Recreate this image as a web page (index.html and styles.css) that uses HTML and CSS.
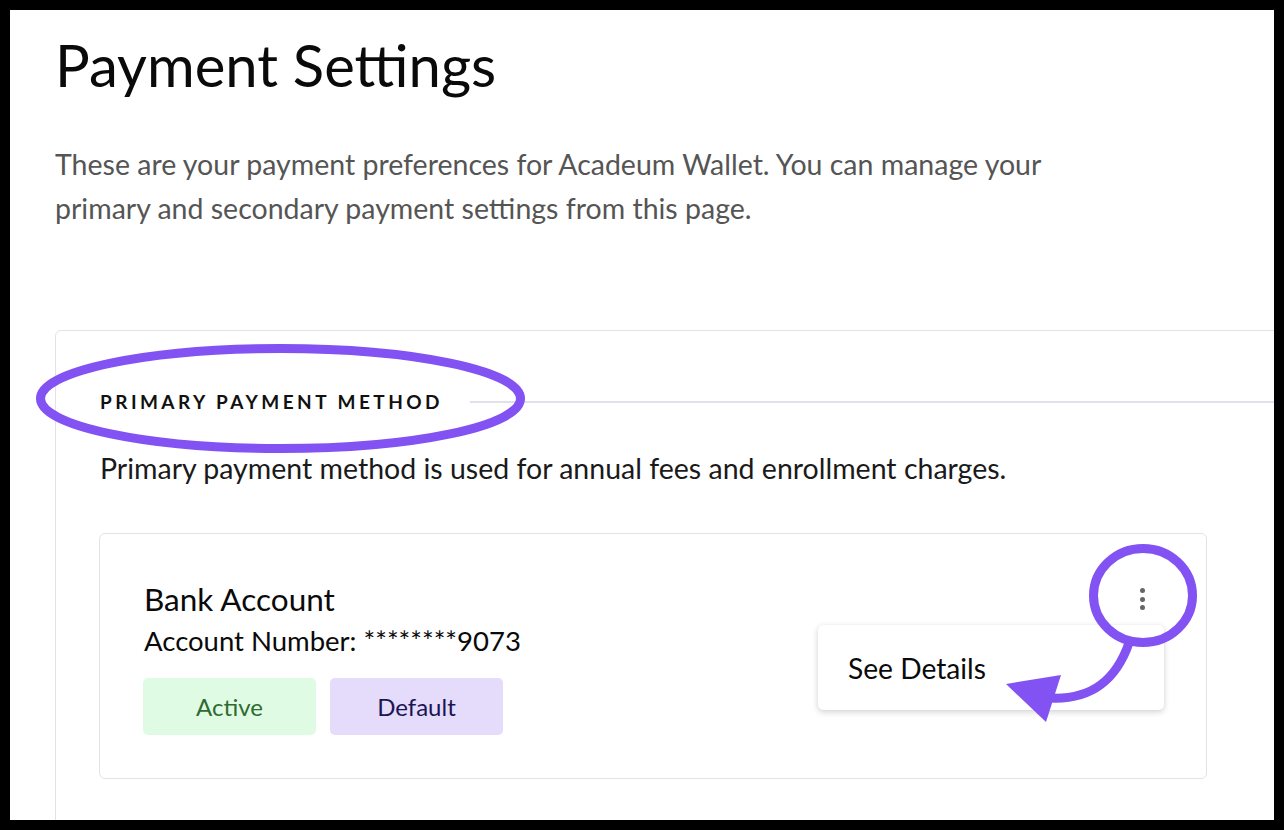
FILE: index.html
```html
<!DOCTYPE html>
<html lang="en">
<head>
<meta charset="utf-8">
<title>Payment Settings</title>
<link rel="stylesheet" href="styles.css">
</head>
<body>
<main class="page">
  <h1 class="title">Payment Settings</h1>
  <p class="intro">These are your payment preferences for Acadeum Wallet. You can manage your primary and secondary payment settings from this page.</p>

  <section class="panel">
    <div class="panel-head">
      <h2 class="panel-title">PRIMARY PAYMENT METHOD</h2>
      <div class="panel-rule"></div>
    </div>
    <p class="panel-desc">Primary payment method is used for annual fees and enrollment charges.</p>

    <div class="method">
      <div class="method-info">
        <div class="method-name">Bank Account</div>
        <div class="method-number">Account Number: ********9073</div>
        <div class="badges">
          <span class="badge badge-active">Active</span>
          <span class="badge badge-default">Default</span>
        </div>
      </div>
      <div class="method-actions">
        <button class="kebab" aria-label="More options">
          <span class="dot"></span><span class="dot"></span><span class="dot"></span>
        </button>
        <div class="menu">
          <div class="menu-item">See Details</div>
        </div>
      </div>
    </div>
  </section>

  <svg class="annotations" width="1264" height="810" viewBox="10 10 1264 810" aria-hidden="true">
    <ellipse cx="280.5" cy="398.5" rx="240" ry="50" fill="none" stroke="#8352f2" stroke-width="9"/>
    <ellipse cx="1143" cy="595.5" rx="49.5" ry="47" fill="none" stroke="#8352f2" stroke-width="9"/>
    <path d="M1129,643 C1116,680 1092,700 1050,698" fill="none" stroke="#8352f2" stroke-width="9"/>
    <polygon points="1006,684 1061,675 1046,722" fill="#8352f2"/>
  </svg>
</main>
</body>
</html>
```

FILE: styles.css
```css
* { box-sizing: border-box; }

html, body {
  margin: 0;
  padding: 0;
  background: #000;
}

body {
  font-family: Lato, "Open Sans", sans-serif;
  color: #111;
}

.page {
  position: relative;
  margin: 10px;
  width: 1264px;
  height: 810px;
  background: #fff;
  overflow: hidden;
  padding-left: 45px;
}

.title {
  margin: 20px 0 0;
  font-size: 58px;
  line-height: 70px;
  font-weight: 400;
  color: #0a0a0a;
}

.intro {
  margin: 42px 0 0;
  width: 1040px;
  font-size: 28.5px;
  line-height: 44px;
  color: #555;
}

.panel {
  margin-top: 100px;
  width: 1300px;
  height: 600px;
  border: 1px solid #e2e3ea;
  border-radius: 6px;
  padding: 0 44px 0 43px;
}

.panel-head {
  display: flex;
  align-items: center;
  margin-top: 58.5px;
  padding-left: 1px;
}

.panel-title {
  margin: 0;
  font-size: 19px;
  line-height: 24px;
  font-weight: 700;
  letter-spacing: 3.45px;
  color: #111;
}

.panel-rule {
  flex: 1;
  height: 2px;
  margin-left: 27px;
  margin-right: -44px;
  background: #dfe2ea;
}

.panel-desc {
  margin: 37.5px 0 0;
  padding-left: 1px;
  font-size: 28.5px;
  line-height: 34px;
  color: #1a1a1a;
}

.method {
  margin-top: 48px;
  width: 1108px;
  border: 1px solid #e2e3ea;
  border-radius: 6px;
  padding: 45px 0 43px 43px;
  display: flex;
  justify-content: space-between;
}

.method-name {
  font-size: 31.5px;
  line-height: 40px;
  color: #0a0a0a;
  padding-left: 1px;
}

.method-number {
  font-size: 27.5px;
  line-height: 44px;
  color: #0a0a0a;
  padding-left: 1px;
}

.badges {
  display: flex;
  gap: 14px;
  margin-top: 15px;
}

.badge {
  width: 173px;
  height: 57px;
  border-radius: 5px;
  display: flex;
  align-items: center;
  justify-content: center;
  font-size: 24px;
}

.badge-active {
  background: #e0fbe4;
  color: #2f6a32;
}

.badge-default {
  background: #e5dbfb;
  color: #1b1552;
}

.method-actions {
  position: relative;
  width: 130px;
}

.kebab {
  margin: 6px 0 0 56px;
  width: 20px;
  height: 28px;
  border: 0;
  background: transparent;
  padding: 0;
  display: flex;
  flex-direction: column;
  align-items: center;
  justify-content: center;
  gap: 3.5px;
}

.dot {
  width: 5px;
  height: 5px;
  border-radius: 50%;
  background: #666;
}

.menu {
  position: absolute;
  top: 46px;
  right: 42px;
  width: 346px;
  height: 85px;
  background: #fff;
  border-radius: 5px;
  box-shadow: 0 2px 6px rgba(0,0,0,0.18), 0 0 1px rgba(0,0,0,0.08);
  display: flex;
  align-items: center;
  padding-left: 30px;
}

.menu-item {
  font-size: 28.2px;
  color: #0a0a0a;
}

.annotations {
  position: absolute;
  left: 0;
  top: 0;
  pointer-events: none;
}
```
